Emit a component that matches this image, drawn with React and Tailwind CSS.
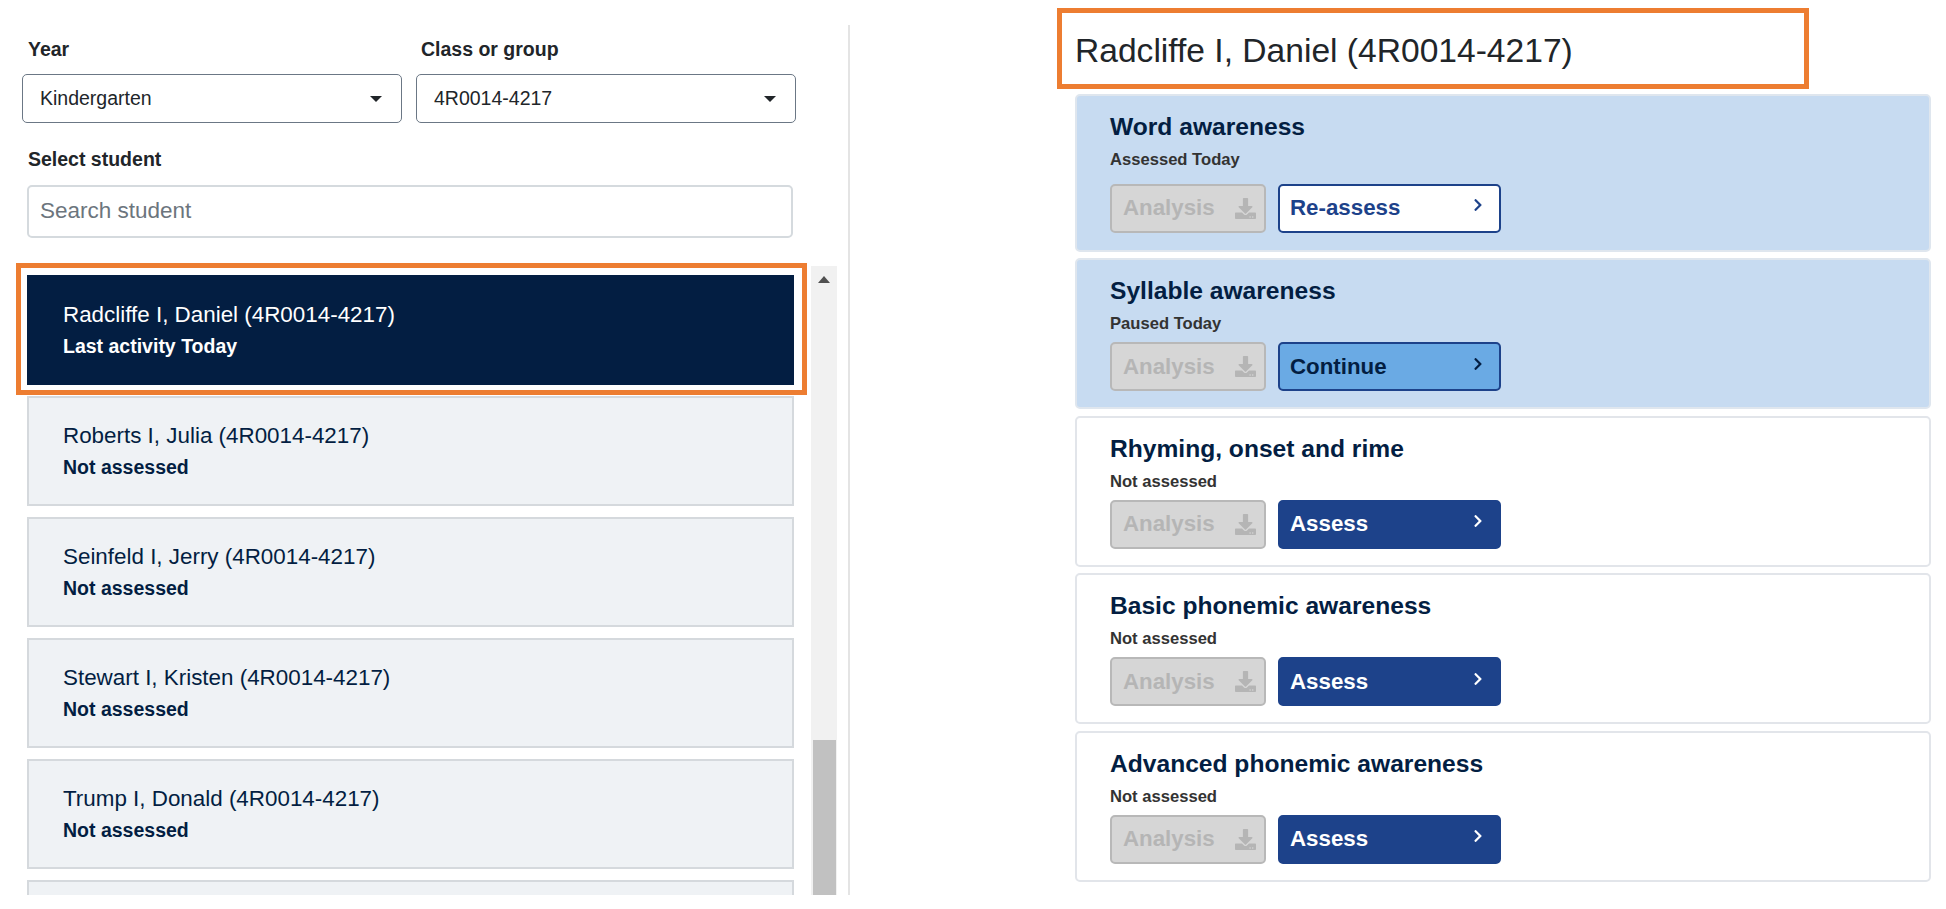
import React from 'react';
import { FaDownload, FaChevronRight } from 'react-icons/fa';

const students = [
  { name: 'Radcliffe I, Daniel (4R0014-4217)', status: 'Last activity Today', active: true },
  { name: 'Roberts I, Julia (4R0014-4217)', status: 'Not assessed' },
  { name: 'Seinfeld I, Jerry (4R0014-4217)', status: 'Not assessed' },
  { name: 'Stewart I, Kristen (4R0014-4217)', status: 'Not assessed' },
  { name: 'Trump I, Donald (4R0014-4217)', status: 'Not assessed' },
  { name: '', status: '' },
];

const assessments = [
  { title: 'Word awareness', status: 'Assessed Today', action: 'Re-assess', kind: 'outline', done: true },
  { title: 'Syllable awareness', status: 'Paused Today', action: 'Continue', kind: 'light', done: true },
  { title: 'Rhyming, onset and rime', status: 'Not assessed', action: 'Assess', kind: 'solid' },
  { title: 'Basic phonemic awareness', status: 'Not assessed', action: 'Assess', kind: 'solid' },
  { title: 'Advanced phonemic awareness', status: 'Not assessed', action: 'Assess', kind: 'solid' },
];

const actionStyles = {
  outline: 'bg-white border-[#1d428a] text-[#1d428a]',
  light: 'bg-[#6aaae4] border-[#1d428a] text-[#031e42]',
  solid: 'bg-[#1d428a] border-[#1d428a] text-white',
};

function Select({ value }) {
  return (
    <div className="w-[380px] h-[49px] flex items-center justify-between pl-[17px] pr-[19px] bg-white border border-[#6b7785] rounded-[5px] text-[19.5px] text-[#212529]">
      <span>{value}</span>
      <span className="w-0 h-0 border-x-[6px] border-x-transparent border-t-[6px] border-t-[#212529]" />
    </div>
  );
}

function StudentCard({ student }) {
  const colors = student.active
    ? 'bg-[#031e42] border-[#031e42] text-white'
    : 'bg-[#eff2f5] border-[#d5d9dd] text-[#031e42]';
  return (
    <div className={`h-[110px] shrink-0 flex flex-col justify-center pl-[34px] pt-[1px] border-2 ${colors}`}>
      <div className="text-[22.4px] leading-[30px]">{student.name}</div>
      <div className="text-[19.5px] leading-[32px] font-bold">{student.status}</div>
    </div>
  );
}

function AssessmentCard({ item }) {
  const colors = item.done ? 'bg-[#c7dbf1] border-[#dfe6ee]' : 'bg-white border-[#e2e5ea]';
  return (
    <div className={`pl-[33px] pt-[14px] border-2 rounded-[5px] ${colors} ${item.kind === 'outline' ? 'pb-[17px]' : 'pb-[16px]'}`}>
      <div className="text-[24.6px] leading-[34px] font-bold text-[#031e42]">{item.title}</div>
      <div className={`text-[16.6px] leading-[24px] font-bold text-[#333333] ${item.kind === 'outline' ? 'mt-[4px] mb-[12px]' : 'mt-[4px] mb-[6px]'}`}>
        {item.status}
      </div>
      <div className="flex gap-[12px]">
        <div className="w-[156px] h-[49px] flex items-center justify-between pl-[11px] pr-[8px] bg-[#d6d6d6] border-2 border-[#b8b8b8] rounded-[5px] text-[#b5b5b5] text-[22.3px] font-bold">
          <span>Analysis</span>
          <FaDownload size={21} />
        </div>
        <div className={`w-[223px] h-[49px] flex items-center justify-between pl-[10px] pr-[14px] border-2 rounded-[5px] text-[22.3px] font-bold ${actionStyles[item.kind]}`}>
          <span>{item.action}</span>
          <FaChevronRight size={14} className="mb-[6px]" />
        </div>
      </div>
    </div>
  );
}

export default function App() {
  return (
    <div className="h-[909px] flex bg-white overflow-hidden font-['Liberation_Sans',Arial,sans-serif]">
      {/* Left column */}
      <div className="w-[850px] h-[870px] mt-[25px] border-r-2 border-[#e4e4e4] flex flex-col shrink-0">
        <div className="flex gap-[14px] pl-[22px]">
          <div>
            <div className="pl-[6px] h-[49px] pt-[11px] text-[19.5px] leading-[26px] font-bold text-[#212529]">Year</div>
            <Select value="Kindergarten" />
          </div>
          <div>
            <div className="pl-[5px] h-[49px] pt-[11px] text-[19.5px] leading-[26px] font-bold text-[#212529]">Class or group</div>
            <Select value="4R0014-4217" />
          </div>
        </div>
        <div className="pl-[28px] mt-[23px] text-[19.5px] leading-[26px] font-bold text-[#212529]">Select student</div>
        <div className="ml-[27px] mt-[13px] w-[766px] h-[53px] flex items-center pl-[11px] pb-[1px] border-2 border-[#d5dade] rounded-[5px] text-[22.5px] text-[#6c757d]">
          Search student
        </div>
        <div className="relative flex flex-1 min-h-0 mt-[28px] pl-[27px]">
          <div className="w-[767px] pt-[9px] flex flex-col gap-[11px] overflow-hidden">
            {students.map((s, i) => <StudentCard key={i} student={s} />)}
          </div>
          <div className="ml-[17px] w-[26px] bg-[#f1f1f1] flex flex-col items-center justify-between">
            <span className="mt-[10px] w-0 h-0 border-x-[6px] border-x-transparent border-b-[7px] border-b-[#505050]" />
            <div className="w-[23px] h-[155px] bg-[#c1c1c1]" />
          </div>
          {/* annotation frame */}
          <div className="absolute left-[16px] top-[-3px] w-[791px] h-[132px] border-[5px] border-[#ed7d31]" />
        </div>
      </div>

      {/* Right column */}
      <div className="flex-1 pl-[225px] pr-[15px] pt-[8px] relative">
        <div className="h-[81px] flex items-center pt-[5px] text-[33.6px] text-[#212529]">
          Radcliffe I, Daniel (4R0014-4217)
        </div>
        <div className="absolute left-[207px] top-[8px] w-[752px] h-[81px] border-[5px] border-[#ed7d31]" />
        <div className="mt-[4.5px] flex flex-col gap-[6.5px]">
          {assessments.map(a => <AssessmentCard key={a.title} item={a} />)}
        </div>
      </div>
    </div>
  );
}
